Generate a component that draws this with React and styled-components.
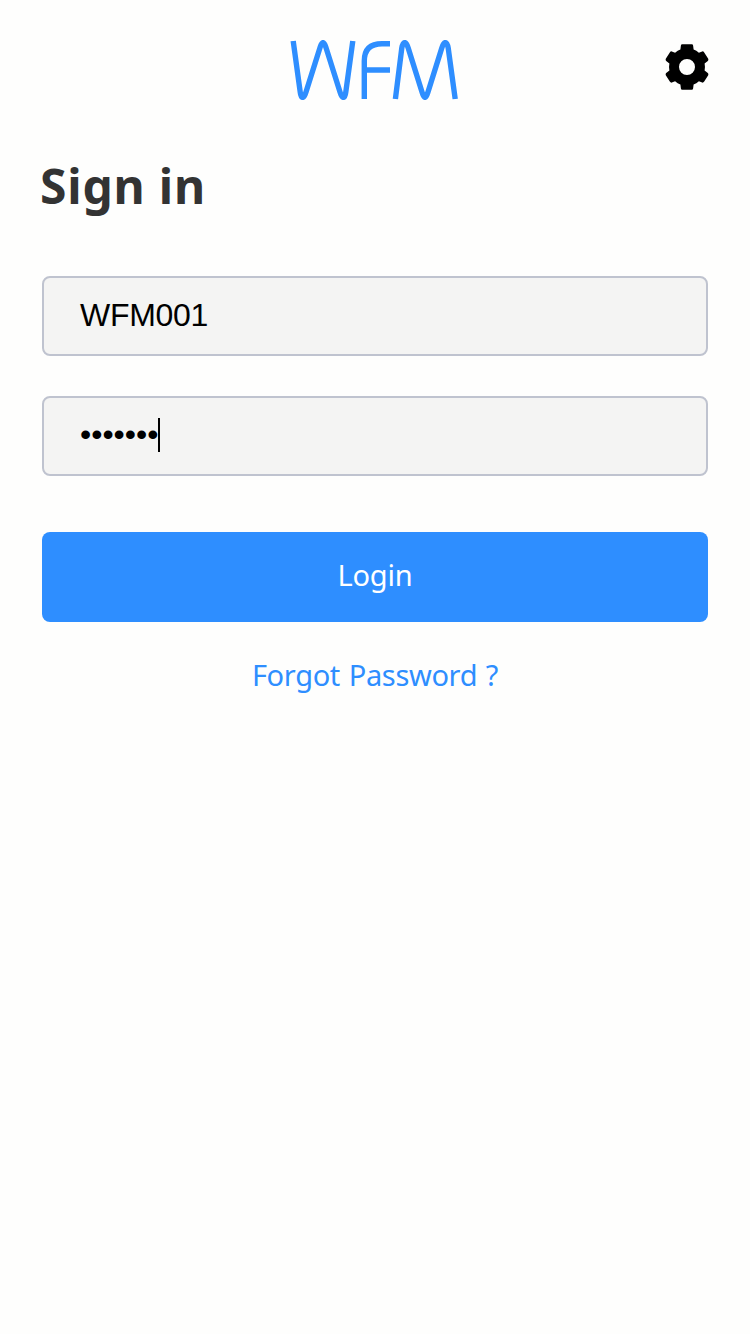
import React from "react";
import styled, { createGlobalStyle } from "styled-components";

const GlobalStyle = createGlobalStyle`
  *, *::before, *::after { box-sizing: border-box; }
  body {
    margin: 0;
    background: #fefefd;
    font-family: "Segoe UI", "Noto Sans", "Open Sans", sans-serif;
  }
`;

const Page = styled.main`
  min-height: 1334px;
  display: flex;
  flex-direction: column;
  padding: 40px 42px 0;
`;

const Header = styled.header`
  display: grid;
  grid-template-columns: 1fr 170px 1fr;
  height: 60px;
`;

const Logo = styled.svg`
  grid-column: 2;
  width: 170px;
  height: 60px;
  fill: none;
  stroke: #2e8eff;
  stroke-width: 5.4;
  stroke-linejoin: round;
  filter: blur(0.5px);
`;

const SettingsButton = styled.button`
  justify-self: end;
  width: 54px;
  height: 54px;
  margin-right: -6px;
  padding: 0;
  border: 0;
  background: none;
  color: #000;

  svg { display: block; width: 54px; height: 54px; filter: blur(0.5px); }
`;

const Title = styled.h1`
  height: 68px;
  margin: 52px 0 0 -2px;
  color: #333;
  font-size: 48px;
  font-weight: 700;
  line-height: 68px;
  letter-spacing: 0.8px;
`;

const Form = styled.form`
  display: flex;
  flex-direction: column;
  margin-top: 56px;
`;

const Field = styled.div`
  display: flex;
  align-items: center;
  height: 80px;
  margin-bottom: 40px;
  padding: 0 36px 2px;
  border: 2px solid #bfc3cf;
  border-radius: 8px;
  background: #f4f4f3;
  color: #000;
  font: 32px/36px "Liberation Sans", Arial, sans-serif;
`;

const Username = styled.span`
  letter-spacing: -0.3px;
`;

const Mask = styled.span`
  margin-top: -2px;
`;

const Caret = styled.span`
  width: 2px;
  height: 34px;
  background: #000;
`;

const LoginButton = styled.button`
  height: 90px;
  margin-top: 16px;
  padding: 0 0 4px;
  border: 0;
  border-radius: 8px;
  background: #2e8eff;
  color: #fff;
  font-family: inherit;
  font-size: 29px;
  line-height: 40px;
  letter-spacing: -0.2px;
`;

const ForgotLink = styled.a`
  align-self: center;
  margin-top: 33px;
  color: #2e8eff;
  font-size: 29px;
  line-height: 40px;
  letter-spacing: -0.34px;
  word-spacing: 1.5px;
`;

export default function App() {
  return (
    <>
      <GlobalStyle />
      <Page>
        <Header>
          <Logo viewBox="0 0 170 60" role="img" aria-label="WFM">
            <path d="M3.2 1 L10.2 52 Q10.8 57.4 12.7 57.4 Q14.4 57.4 16 52 L30.2 7 Q31.6 2.6 33 2.6 Q34.4 2.6 35.8 7 L50 52 Q51.6 57.4 53.3 57.4 Q55.2 57.4 55.8 52 L62.8 1" />
            <path d="M100 3.8 H92 Q74.3 3.8 74.3 21 V59 M74.3 30 H100" />
            <path d="M105.4 59 L111.8 8 Q112.8 2.6 114.8 2.6 Q116.6 2.6 118.2 8 L132 52 Q133.6 57.4 135 57.4 Q136.4 57.4 138 52 L151.8 8 Q153.4 2.6 155.2 2.6 Q157.2 2.6 158.2 8 L165.2 59" />
          </Logo>
          <SettingsButton type="button" aria-label="Settings">
            <svg viewBox="0 0 54 54" fill="currentColor">
              <path
                fillRule="evenodd"
                d="M22.3 4.3 H31.7 Q33 4.3 33.1 5.6 L33.6 9.4 Q36.4 10.4 38.9 12.7 L42.2 11.4 Q43.4 11.2 44.2 12.4 L48.2 18.8 Q48.8 20 47.8 20.9 L44.6 23.6 Q45.3 27 44.6 30.4 L47.8 33.1 Q48.8 34 48.2 35.2 L44.2 41.6 Q43.4 42.8 42.2 42.6 L38.9 41.3 Q36.4 43.6 33.6 44.6 L33.1 48.4 Q33 49.7 31.7 49.7 H22.3 Q21 49.7 20.9 48.4 L20.4 44.6 Q17.6 43.6 15.1 41.3 L11.8 42.6 Q10.6 42.8 9.8 41.6 L5.8 35.2 Q5.2 34 6.2 33.1 L9.4 30.4 Q8.7 27 9.4 23.6 L6.2 20.9 Q5.2 20 5.8 18.8 L9.8 12.4 Q10.6 11.2 11.8 11.4 L15.1 12.7 Q17.6 10.4 20.4 9.4 L20.9 5.6 Q21 4.3 22.3 4.3 Z M27 19 A8 8 0 1 0 27 35 A8 8 0 1 0 27 19 Z"
              />
            </svg>
          </SettingsButton>
        </Header>
        <Title>Sign in</Title>
        <Form>
          <Field>
            <Username>WFM001</Username>
          </Field>
          <Field>
            <Mask>•••••••</Mask>
            <Caret />
          </Field>
          <LoginButton type="button">Login</LoginButton>
          <ForgotLink>Forgot Password ?</ForgotLink>
        </Form>
      </Page>
    </>
  );
}
